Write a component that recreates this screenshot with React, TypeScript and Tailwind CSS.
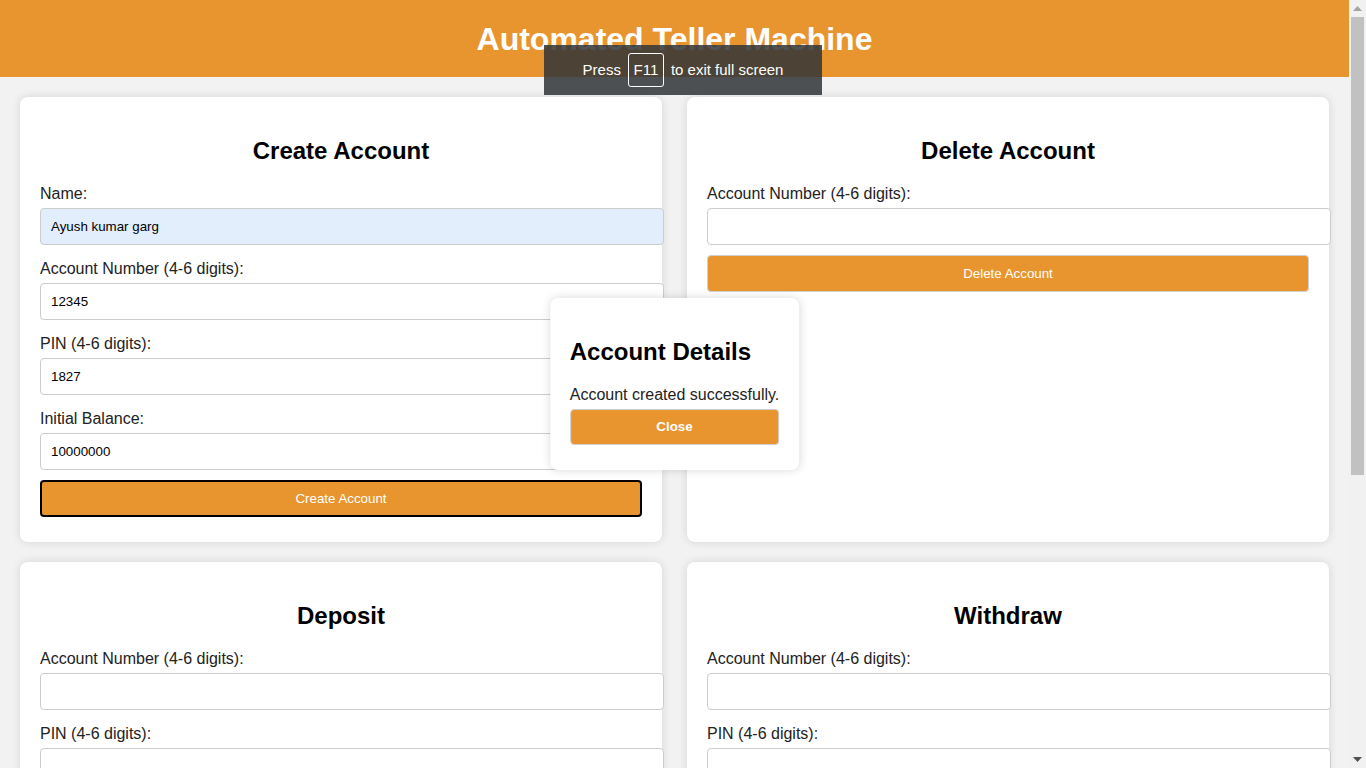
import React from "react";

const ORANGE = "bg-[#e9952f]";

type Field = { label: string; value?: string; autofill?: boolean };

function Input({ value, autofill }: { value?: string; autofill?: boolean }) {
  return (
    <input
      readOnly
      value={value ?? ""}
      className={`mt-[5px] block h-[37px] w-[calc(100%+22px)] rounded-[4px] border border-[#cccccc] px-[10px] text-[13.33px] text-black outline-none ${
        autofill ? "bg-[#e3eefc]" : "bg-white"
      }`}
    />
  );
}

function Card({
  title,
  fields,
  button,
  focused,
}: {
  title: string;
  fields: Field[];
  button: string;
  focused?: boolean;
}) {
  return (
    <section className="rounded-lg bg-white p-5 shadow-[0_0_10px_rgba(0,0,0,0.12)]">
      <h2 className="my-5 text-center text-2xl leading-[28px] font-bold text-black">{title}</h2>
      <div className="flex flex-col">
        {fields.map((f, i) => (
          <div key={i} className={i === fields.length - 1 ? "mb-[10px]" : "mb-[15px]"}>
            <label className="block text-base leading-[18px] text-[#222]">{f.label}</label>
            <Input value={f.value} autofill={f.autofill} />
          </div>
        ))}
      </div>
      <button
        className={`mb-[5px] h-[37px] w-full rounded-[4px] text-[13.33px] text-white ${ORANGE} ${
          focused ? "border-2 border-black" : "border border-[#d0d0d0]"
        }`}
      >
        {button}
      </button>
    </section>
  );
}

function Scrollbar() {
  return (
    <div className="flex h-full w-[17px] shrink-0 flex-col bg-[#f1f1f1]">
      <div className="flex h-[17px] items-center justify-center">
        <svg width="9" height="5" viewBox="0 0 9 5">
          <path d="M0 5 L4.5 0 L9 5 Z" fill="#a3a3a3" />
        </svg>
      </div>
      <div className="mx-[2px] h-[458px] bg-[#c1c1c1]" />
      <div className="flex-1" />
      <div className="flex h-[17px] items-center justify-center">
        <svg width="9" height="5" viewBox="0 0 9 5">
          <path d="M0 0 L9 0 L4.5 5 Z" fill="#505050" />
        </svg>
      </div>
    </div>
  );
}

export default function App() {
  return (
    <div className="relative flex h-screen w-full overflow-hidden bg-[#f2f2f2] font-['Liberation_Sans',Arial,sans-serif]">
      <div className="relative flex-1 overflow-hidden">
        <header className={`flex h-[77px] items-center justify-center ${ORANGE}`}>
          <h1 className="text-[32px] font-bold text-white">Automated Teller Machine</h1>
        </header>

        <main className="grid grid-cols-2 gap-x-[25px] gap-y-5 p-5">
          <Card
            title="Create Account"
            focused
            button="Create Account"
            fields={[
              { label: "Name:", value: "Ayush kumar garg", autofill: true },
              { label: "Account Number (4-6 digits):", value: "12345" },
              { label: "PIN (4-6 digits):", value: "1827" },
              { label: "Initial Balance:", value: "10000000" },
            ]}
          />
          <Card
            title="Delete Account"
            button="Delete Account"
            fields={[{ label: "Account Number (4-6 digits):" }]}
          />
          <Card
            title="Deposit"
            button="Deposit"
            fields={[
              { label: "Account Number (4-6 digits):" },
              { label: "PIN (4-6 digits):" },
              { label: "Amount:" },
            ]}
          />
          <Card
            title="Withdraw"
            button="Withdraw"
            fields={[
              { label: "Account Number (4-6 digits):" },
              { label: "PIN (4-6 digits):" },
              { label: "Amount:" },
            ]}
          />
        </main>

        {/* Modal */}
        <div className="absolute top-1/2 left-1/2 w-max -translate-x-1/2 -translate-y-1/2 rounded-lg bg-white p-5 shadow-[0_0_10px_rgba(0,0,0,0.15)]">
          <h2 className="my-5 text-2xl leading-[28px] font-bold text-black">Account Details</h2>
          <p className="text-base leading-[18px] text-[#222]">Account created successfully.</p>
          <button
            className={`mt-[5px] mb-[5px] h-[36px] w-full rounded-[4px] border border-[#d0d0d0] text-[13.33px] font-bold text-white ${ORANGE}`}
          >
            Close
          </button>
        </div>
      </div>

      <Scrollbar />

      {/* Fullscreen notice */}
      <div className="absolute top-[45px] left-1/2 flex h-[50px] w-[278px] -translate-x-1/2 items-center justify-center gap-[7px] bg-[rgba(50,53,56,0.86)] text-[15px] text-white">
        <span>Press</span>
        <span className="flex h-[34px] w-[36px] items-center justify-center rounded-[3px] border border-white">F11</span>
        <span>to exit full screen</span>
      </div>
    </div>
  );
}
